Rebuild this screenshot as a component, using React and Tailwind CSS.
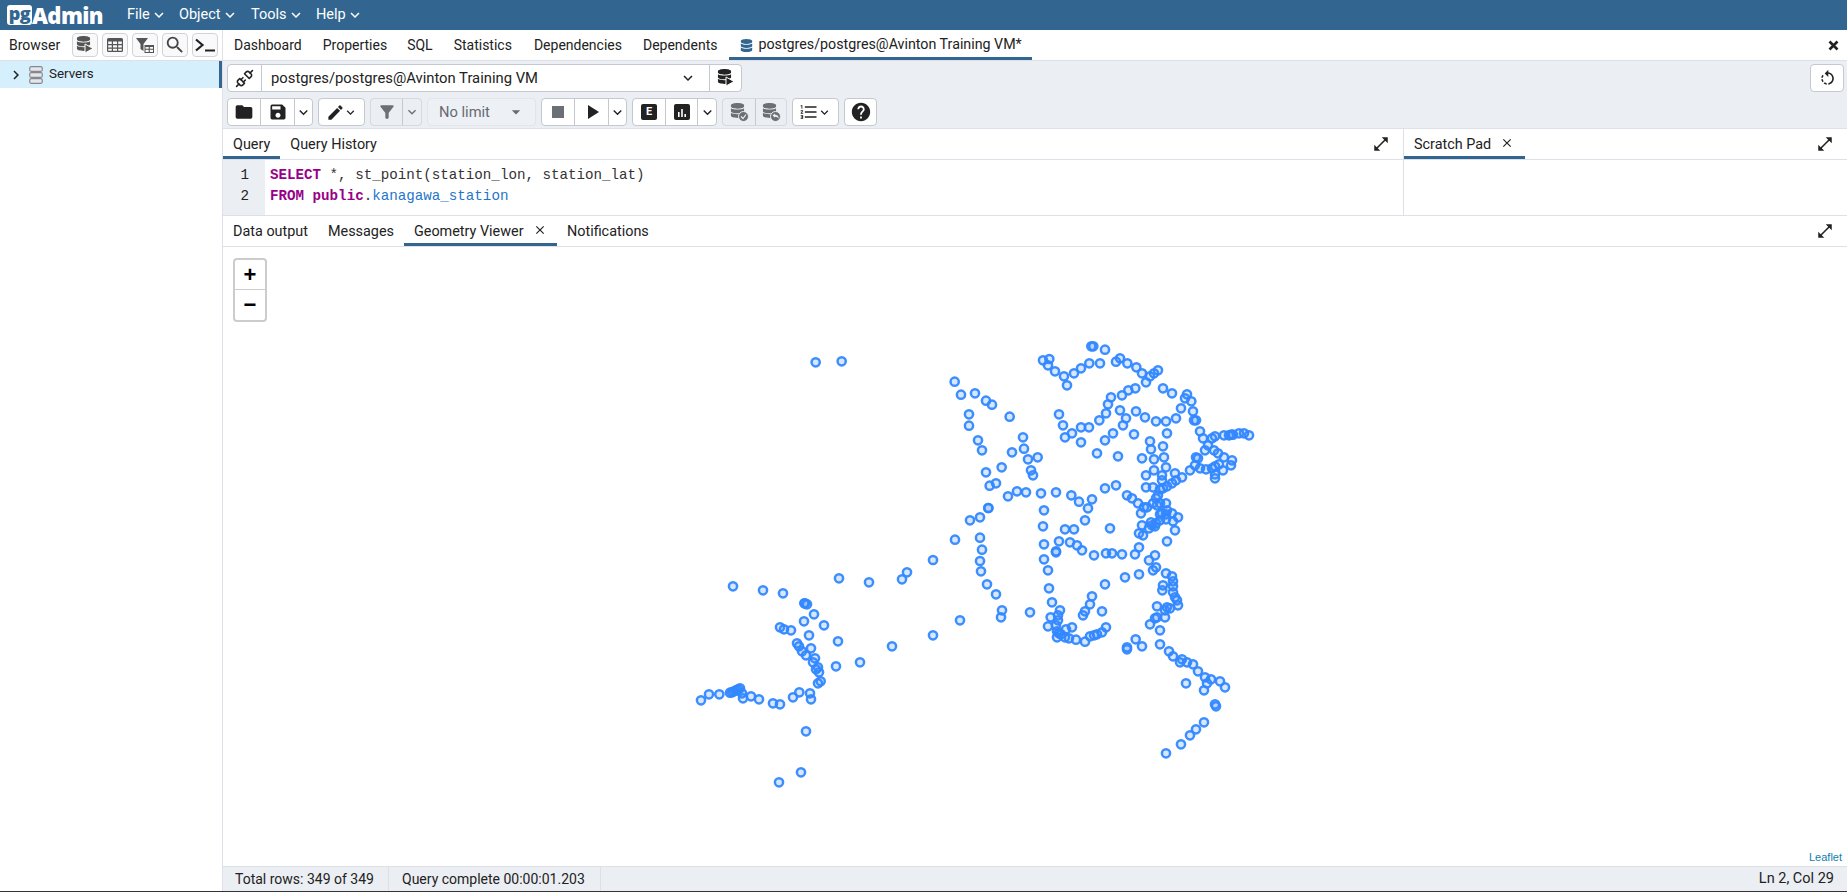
import {
  MdFolder, MdSave, MdEdit, MdFilterAlt, MdStop, MdPlayArrow, MdKeyboardArrowDown, MdKeyboardArrowRight,
  MdHelp, MdFormatListNumbered, MdOpenInFull, MdClose, MdSearch, MdRotateLeft, MdArrowDropDown,
} from 'react-icons/md';
import { FaDatabase } from 'react-icons/fa';
import { Unplug } from 'lucide-react';

// station points read off the reference, grouped per crop: [offsetX, offsetY, list of 3x coords]
const crops = [
  [680, 330, [407,97, 485,94]],
  [930, 330, [74,155,93,194,135,190,168,212,186,224,117,253,117,287,144,331,156,361,239,260,279,322,282,356,246,367,294,388,323,382,215,412,168,427,303,421,309,436,198,460,179,467,234,499,261,484,288,487,333,490,378,487,424,496,447,515,486,508,474,535,342,541,175,534,175,534,150,562,120,571,339,589,405,598,432,598,465,571,540,595,525,475,558,466,
    484,49,490,49,525,59,339,91,358,87,354,106,375,124,402,139,411,166,432,130,453,115,478,100,510,100,558,95,570,85,592,100,619,112,636,130,648,157,660,139,672,130,684,121,699,175,726,190,771,193,765,205,784,214,753,235,789,244,738,265,708,274,678,274,645,262,618,244,570,241,588,265,579,286,549,310,525,331,453,337,405,322,426,310,453,292,477,292,508,271,528,250,534,223,543,202,576,196,595,181,616,175,387,253,399,286,612,313,711,310,792,271,798,271,810,304,819,325,834,346,846,325,855,319,882,316,897,316,903,314,909,314,927,310,942,310,957,316,660,334,663,358,699,349,501,370,564,379,636,385,672,388,702,382,708,412,672,421,648,436,696,436,735,430,756,442,780,421,825,361,852,361,864,370,882,382,906,391,903,406,879,421,867,403,855,409,846,415,828,418,810,415,795,406,804,385,798,382,855,433,855,445,648,472,669,472,696,451,699,475,711,469,726,460,738,451,591,496,606,505,624,520,651,532,642,532,633,550,690,478,684,496,678,505,669,520,708,520,690,520,681,526,711,541,726,550,708,553,696,550,744,562,729,574,708,568,690,571,678,580,663,577,636,586,735,601,666,586,675,589,690,553]],
  [925, 525, [90,44,165,38,171,74]],
  [680, 560, [159,79,249,91,309,100,477,55,567,67,666,58,681,37,759,0,900,3,903,34,921,73,948,103,966,151,963,172,840,181,759,226,636,259,540,307,468,319,474,244,432,196,402,163,372,184,375,130,381,133,373,130,300,202,312,208,333,211,387,226,351,250,357,259,366,274,378,286,393,265,405,295,399,307,414,322,408,328,417,337,422,364,414,370,358,397,339,412,390,400,393,418,378,514,363,637,297,667,300,433,279,430,237,418,213,409,189,415,186,400,180,385,174,388,168,391,162,394,156,397,150,398,118,403,87,403,63,421]],
  [1000, 520, [417,40,429,46,447,25,501,64,177,64,132,73,168,94,168,97,210,67,231,76,246,91,282,106,318,100,336,100,366,103,405,103,417,82,465,106,447,121,468,142,459,151,498,160,516,169,519,184,417,163,375,172,315,193,132,118,144,151,147,205,156,247,180,271,174,286,174,301,152,292,168,316,144,319,276,229,270,253,255,274,249,286,306,274,318,322,306,337,291,343,282,346,270,349,255,365,228,359,207,355,195,352,216,322,198,328,183,343,177,340,171,352,171,334,90,277,489,196,487,211,519,199,519,217,525,232,531,241,534,256,510,265,501,262,471,259,495,271,495,292,471,292,465,295,450,313,480,331,480,373,507,394,519,409,546,418,540,427,561,427,579,433,594,454,615,472,621,490,633,478,660,484,675,502,612,511,558,490,645,553,648,559,612,607,588,628,570,646,543,673,498,700,407,358,426,379,381,382,381,388]],
];

const points = [];
crops.forEach(([ox, oy, list]) => {
  for (let i = 0; i < list.length; i += 2) {
    points.push([ox + list[i] / 3, oy + list[i + 1] / 3]);
  }
});

// database stack with a small badge in the lower right corner
const DbIcon = ({ color = '#222', badge }) => (
  <span className="relative inline-flex w-[18px] h-[18px]">
    <FaDatabase size={15} color={color} />
    {badge === 'play' && (
      <svg className="absolute right-0 bottom-0" width="10" height="11" viewBox="0 0 10 11"><path d="M1 1 L9 5.5 L1 10 Z" fill={color} stroke="#fff" strokeWidth="1" /></svg>
    )}
    {badge === 'check' && (
      <svg className="absolute right-[-1px] bottom-[-1px]" width="11" height="11" viewBox="0 0 11 11"><circle cx="5.5" cy="5.5" r="5" fill={color} stroke="#ebeef3" /><path d="M3 5.5 L5 7.5 L8 3.5" fill="none" stroke="#ebeef3" strokeWidth="1.2" /></svg>
    )}
    {badge === 'back' && (
      <svg className="absolute right-[-1px] bottom-[-1px]" width="11" height="11" viewBox="0 0 11 11"><circle cx="5.5" cy="5.5" r="5" fill={color} stroke="#ebeef3" /><path d="M2.5 4.5 L5 2.5 V3.8 C8 3.8 9 6 8.5 8 C8 6.5 7 5.7 5 5.7 V6.8 Z" fill="#ebeef3" /></svg>
    )}
  </span>
);

const TableIcon = () => (
  <svg width="16" height="14" viewBox="0 0 16 14"><path fillRule="evenodd" d="M0 1.5 A1.5 1.5 0 0 1 1.5 0 H14.5 A1.5 1.5 0 0 1 16 1.5 V12.5 A1.5 1.5 0 0 1 14.5 14 H1.5 A1.5 1.5 0 0 1 0 12.5 Z M1.2 3.5 V6 H4.8 V3.5 Z M6 3.5 V6 H10 V3.5 Z M11.2 3.5 V6 H14.8 V3.5 Z M1.2 7.2 V9.6 H4.8 V7.2 Z M6 7.2 V9.6 H10 V7.2 Z M11.2 7.2 V9.6 H14.8 V7.2 Z M1.2 10.8 V12.8 H4.8 V10.8 Z M6 10.8 V12.8 H10 V10.8 Z M11.2 10.8 V12.8 H14.8 V10.8 Z" fill="#555" /></svg>
);

const FilterTableIcon = () => (
  <svg width="18" height="15" viewBox="0 0 18 15"><path d="M0 0 H12 L7.5 6 V13 L4.5 11 V6 Z" fill="#555" /><path fillRule="evenodd" d="M8.5 7 H18 V15 H8.5 Z M9.5 9 V10.7 H12.7 V9 Z M13.8 9 V10.7 H17 V9 Z M9.5 11.7 V14 H12.7 V11.7 Z M13.8 11.7 V14 H17 V11.7 Z" fill="#555" /></svg>
);

const TerminalIcon = () => (
  <svg width="20" height="15" viewBox="0 0 20 15"><path d="M1 1.5 L7.5 7 L1 12.5" fill="none" stroke="#222" strokeWidth="2.2" /><rect x="10" y="11.5" width="10" height="2" fill="#222" /></svg>
);

const ServerIcon = () => (
  <svg width="14" height="18" viewBox="0 0 14 18">
    {[0, 6, 12].map((y) => (
      <rect key={y} x="0.7" y={y + 0.7} width="12.6" height="4.6" rx="1.5" fill="#e4e6ea" stroke="#85898f" strokeWidth="1.2" />
    ))}
  </svg>
);

const BlackBox = ({ children }) => (
  <span className="w-[16px] h-[16px] rounded-[2px] bg-[#222] flex items-center justify-center text-white text-[11px] font-bold">{children}</span>
);

const SmallBtn = ({ children }) => (
  <div className="w-[26px] h-[24px] border border-[#d0d4da] rounded bg-[#f9f9fa] flex items-center justify-center">{children}</div>
);

// toolbar button group; each item is [width, icon]
const Group = ({ items, disabled }) => (
  <div className={`h-[28px] flex border border-[#c3c8d1] rounded ${disabled ? 'bg-[#ebeef3] border-[#d5d9e0]' : 'bg-white'}`}>
    {items.map(([width, icon], i) => (
      <div
        key={i}
        style={{ width }}
        className={`flex items-center justify-center ${i > 0 ? 'border-l border-[#c3c8d1]' : ''}`}
      >
        {icon}
      </div>
    ))}
  </div>
);

const Tab = ({ children, active, close, className = '', text = 'text-[14.4px] pt-[1px]' }) => (
  <div className={`relative h-full flex items-center px-[10px] text-[#222] ${text} ${className}`}>
    {children}
    {close && <MdClose size={14} className="ml-[9px] mb-[4px]" />}
    {active && <div className="absolute left-0 right-0 bottom-0 h-[3px] bg-[#326690]" />}
  </div>
);

const dark = '#222222';
const grey = '#6b6f76';

export default function App() {
  return (
    <div className="h-screen w-full flex flex-col overflow-hidden bg-white text-[#222] font-['Roboto',sans-serif]">
      {/* top menu bar */}
      <div className="h-[30px] bg-[#326690] flex items-center text-white shrink-0">
        <div className="ml-[7px] w-[96px] flex items-center">
          <span className="w-[30px] h-[20px] bg-white rounded-[3px] flex items-center justify-center text-[#326690] text-[18px] leading-none font-extrabold pb-[4px] font-['Open_Sans',sans-serif] tracking-[-0.5px]">pg</span>
          <span className="text-[22px] leading-none font-extrabold font-['Open_Sans',sans-serif] tracking-[-0.6px]">Admin</span>
        </div>
        <div className="ml-[24px] flex items-center text-[14.5px]">
          <span className="w-[52px] flex items-center">File<MdKeyboardArrowDown size={18} /></span>
          <span className="w-[72px] flex items-center">Object<MdKeyboardArrowDown size={18} /></span>
          <span className="w-[65px] flex items-center">Tools<MdKeyboardArrowDown size={18} /></span>
          <span className="flex items-center">Help<MdKeyboardArrowDown size={18} /></span>
        </div>
      </div>

      <div className="flex-1 flex min-h-0">
        {/* browser panel */}
        <div className="w-[223px] shrink-0 border-r border-[#dde0e6] flex flex-col">
          <div className="h-[31px] border-b border-[#dde0e6] flex items-center shrink-0">
            <span className="ml-[9px] w-[63px] text-[14px]">Browser</span>
            <div className="flex gap-[4px]">
              <SmallBtn><DbIcon color="#555" badge="play" /></SmallBtn>
              <SmallBtn><TableIcon /></SmallBtn>
              <SmallBtn><FilterTableIcon /></SmallBtn>
              <SmallBtn><MdSearch size={22} color="#444" /></SmallBtn>
              <SmallBtn><TerminalIcon /></SmallBtn>
            </div>
          </div>
          <div className="h-[27px] bg-[#d6effc] border-r-[3px] border-[#326690] flex items-center shrink-0">
            <MdKeyboardArrowRight size={18} className="ml-[7px]" color={dark} />
            <span className="ml-[4px] flex"><ServerIcon /></span>
            <span className="ml-[6px] text-[13.4px]">Servers</span>
          </div>
        </div>

        {/* main panel */}
        <div className="flex-1 min-w-0 flex flex-col">
          <div className="h-[31px] border-b border-[#dde0e6] flex items-center shrink-0 pr-[11px]">
            <Tab text="text-[14px]" className="px-[11px]">Dashboard</Tab>
            <Tab text="text-[14px]">Properties</Tab>
            <Tab text="text-[14px]">SQL</Tab>
            <Tab text="text-[14px]" className="pl-[11px]">Statistics</Tab>
            <Tab text="text-[14px]" className="pl-[12px]">Dependencies</Tab>
            <Tab text="text-[14px]" className="pl-[11px]">Dependents</Tab>
            <Tab active text="text-[14.25px]" className="ml-[2px] pl-[11px] w-[303px]">
              <FaDatabase size={13} color="#326690" className="mr-[5px]" />
              postgres/postgres@Avinton Training VM*
            </Tab>
            <svg className="ml-auto mr-[-3px]" width="11" height="11" viewBox="0 0 11 11"><path d="M1.5 1.5 L9.5 9.5 M9.5 1.5 L1.5 9.5" stroke={dark} strokeWidth="2.6" /></svg>
          </div>

          {/* query toolbar */}
          <div className="h-[68px] bg-[#ebeef3] border-b border-[#dde0e6] shrink-0 pt-[3px] pl-[4px] pr-[3px] flex flex-col gap-[6px]">
            <div className="flex items-center justify-between">
              <div className="w-[515px] h-[28px] flex border border-[#c3c8d1] rounded bg-white">
                <div className="w-[33px] flex items-center justify-center"><Unplug size={19} color={dark} /></div>
                <div className="flex-1 flex items-center border-l border-[#c3c8d1] pl-[9px] text-[14.8px]">
                  postgres/postgres@Avinton Training VM
                  <MdKeyboardArrowDown size={18} className="ml-auto mr-[12px]" />
                </div>
                <div className="w-[32px] flex items-center justify-center border-l border-[#c3c8d1]"><DbIcon badge="play" /></div>
              </div>
              <div className="w-[34px] h-[28px] border border-[#c3c8d1] rounded bg-white flex items-center justify-center"><MdRotateLeft size={19} color={dark} /></div>
            </div>
            <div className="flex items-center gap-[5px]">
              <Group items={[[32, <MdFolder size={20} color={dark} />], [34, <MdSave size={20} color={dark} />], [18, <MdKeyboardArrowDown size={17} color={dark} />]]} />
              <Group items={[[45, <span className="flex items-center"><MdEdit size={19} color={dark} /><MdKeyboardArrowDown size={15} color={dark} className="-ml-[2px]" /></span>]]} />
              <Group disabled items={[[31, <MdFilterAlt size={20} color={grey} />], [19, <MdKeyboardArrowDown size={16} color={grey} />]]} />
              <div className="w-[109px] h-[28px] border border-[#e2e5ea] rounded bg-[#edf0f4] flex items-center pl-[11px] text-[14.7px] text-[#656a73]">
                No limit
                <MdArrowDropDown size={20} color="#656a73" className="ml-auto mr-[9px]" />
              </div>
              <Group items={[[32, <MdStop size={24} color={grey} />], [34, <MdPlayArrow size={24} color={dark} />], [18, <MdKeyboardArrowDown size={17} color={dark} />]]} />
              <Group items={[[32, <BlackBox>E</BlackBox>], [32, <BlackBox><svg width="10" height="9" viewBox="0 0 10 9"><path d="M1 4 H2.6 V9 H1 Z M4.2 1 H5.8 V9 H4.2 Z M7.4 6 H9 V9 H7.4 Z" fill="#fff" /></svg></BlackBox>], [19, <MdKeyboardArrowDown size={17} color={dark} />]]} />
              <Group disabled items={[[32, <DbIcon color={grey} badge="check" />], [31, <DbIcon color={grey} badge="back" />]]} />
              <Group items={[[45, <span className="flex items-center"><MdFormatListNumbered size={20} color={dark} /><MdKeyboardArrowDown size={15} color={dark} className="-ml-[2px]" /></span>]]} />
              <Group items={[[31, <MdHelp size={22} color={dark} />]]} />
            </div>
          </div>

          {/* query + scratch pad */}
          <div className="h-[87px] flex border-b border-[#dde0e6] shrink-0">
            <div className="w-[1181px] flex flex-col border-r border-[#dde0e6]">
              <div className="h-[31px] flex items-center border-b border-[#dde0e6]">
                <Tab active>Query</Tab>
                <Tab>Query History</Tab>
                <MdOpenInFull size={18} className="ml-auto mr-[13px]" color={dark} />
              </div>
              <div className="flex-1 flex">
                <div className="w-[42px] bg-[#ebeef3] flex flex-col items-end pr-[16px] pt-[5px] text-[14.2px] leading-[20.5px] font-['Liberation_Mono',monospace]">
                  <span>1</span>
                  <span>2</span>
                </div>
                <div className="pl-[5px] pt-[5px] text-[14.2px] leading-[20.5px] font-['Liberation_Mono',monospace] text-[#333]">
                  <div><span className="text-[#908] font-bold">SELECT</span> *, st_point(station_lon, station_lat)</div>
                  <div><span className="text-[#908] font-bold">FROM</span> <span className="text-[#908] font-bold">public</span>.<span className="text-[#1f75cb]">kanagawa_station</span></div>
                </div>
              </div>
            </div>
            <div className="flex-1 flex flex-col">
              <div className="h-[31px] flex items-center border-b border-[#dde0e6]">
                <Tab active close className="w-[121px]">Scratch Pad</Tab>
                <MdOpenInFull size={18} className="ml-auto mr-[13px]" color={dark} />
              </div>
            </div>
          </div>

          {/* results tabs */}
          <div className="h-[31px] flex items-center border-b border-[#dde0e6] shrink-0">
            <Tab>Data output</Tab>
            <Tab>Messages</Tab>
            <Tab active close className="w-[153px]">Geometry Viewer</Tab>
            <Tab>Notifications</Tab>
            <MdOpenInFull size={18} className="ml-auto mr-[13px]" color={dark} />
          </div>

          {/* geometry viewer map */}
          <div className="relative flex-1 min-h-0">
            <svg className="absolute inset-0 w-full h-full">
              {points.map(([x, y], i) => (
                <circle key={i} cx={x - 223} cy={y - 247} r="4.1" fill="#3388ff" fillOpacity="0.2" stroke="#3388ff" strokeWidth="2.5" strokeOpacity="0.95" />
              ))}
            </svg>
            <div className="absolute left-[10px] top-[11px] w-[34px] rounded-[4px] border-2 border-[#cccccc] bg-white font-['Liberation_Sans',sans-serif] text-black font-bold text-[22px] leading-[30px] text-center">
              <div className="h-[30px] border-b border-[#ccc]">+</div>
              <div className="h-[30px]">−</div>
            </div>
            <span className="absolute right-[5px] bottom-[2px] text-[11px] leading-[14px] text-[#0f80b0] font-['Liberation_Sans',sans-serif]">Leaflet</span>
          </div>

          {/* status bar */}
          <div className="h-[25px] bg-[#ebeef3] border-t border-[#dde0e6] flex items-center text-[14px] shrink-0">
            <div className="h-full w-[166px] pl-[12px] flex items-center border-r border-[#dde0e6]">Total rows: 349 of 349</div>
            <div className="h-full w-[212px] pl-[13px] flex items-center border-r border-[#dde0e6]">Query complete 00:00:01.203</div>
            <span className="ml-auto mr-[13px] text-[14.5px]">Ln 2, Col 29</span>
          </div>
        </div>
      </div>
      <div className="h-[1px] bg-[#333] shrink-0" />
    </div>
  );
}
